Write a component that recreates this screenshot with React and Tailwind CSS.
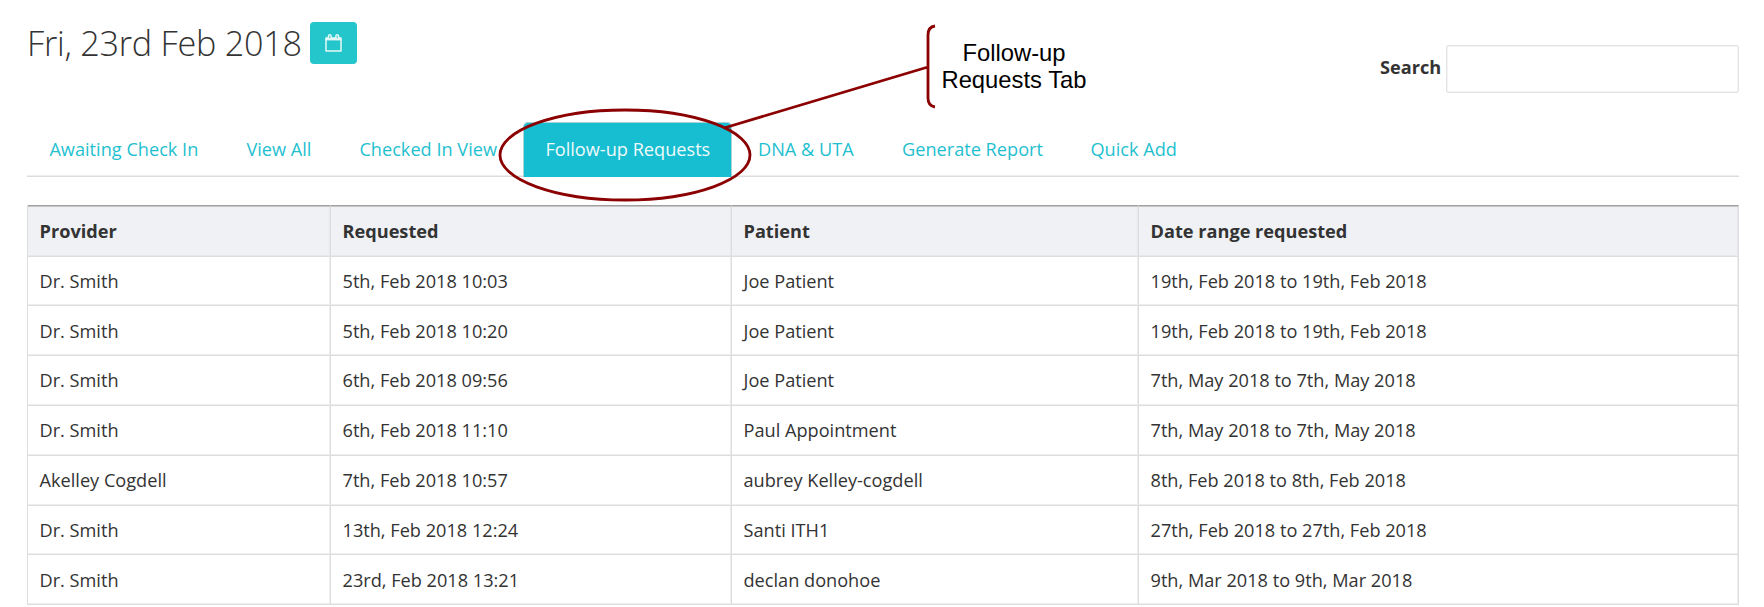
const tabs = [
  { label: 'Awaiting Check In', box: 'w-[197px] pl-[22.4px]' },
  { label: 'View All', box: 'w-[113px] pl-[22.4px]' },
  { label: 'Checked In View', box: 'w-[186px] pl-[22.4px]' },
  { label: 'Follow-up Requests', active: true, box: 'w-[209px] pl-[21.4px]' },
  { label: 'DNA & UTA', box: 'w-[148px] pl-[26px]' },
  { label: 'Generate Report', box: 'w-[188px] pl-[22px]' },
  { label: 'Quick Add', box: 'w-[140px] pl-[22.4px]' },
];

const headers = ['Provider', 'Requested', 'Patient', 'Date range requested'];

const rows = [
  ['Dr. Smith', '5th, Feb 2018 10:03', 'Joe Patient', '19th, Feb 2018 to 19th, Feb 2018'],
  ['Dr. Smith', '5th, Feb 2018 10:20', 'Joe Patient', '19th, Feb 2018 to 19th, Feb 2018'],
  ['Dr. Smith', '6th, Feb 2018 09:56', 'Joe Patient', '7th, May 2018 to 7th, May 2018'],
  ['Dr. Smith', '6th, Feb 2018 11:10', 'Paul Appointment', '7th, May 2018 to 7th, May 2018'],
  ['Akelley Cogdell', '7th, Feb 2018 10:57', 'aubrey Kelley-cogdell', '8th, Feb 2018 to 8th, Feb 2018'],
  ['Dr. Smith', '13th, Feb 2018 12:24', 'Santi ITH1', '27th, Feb 2018 to 27th, Feb 2018'],
  ['Dr. Smith', '23rd, Feb 2018 13:21', 'declan donohoe', '9th, Mar 2018 to 9th, Mar 2018'],
];

const cellStyles = [
  'h-[49px] pt-px leading-[47px]',
  'h-[50px] pt-[2px] leading-[47px]',
  'h-[50px] pt-px leading-[47px]',
  'h-[50px] pt-px leading-[47px]',
  'h-[50px] pt-px leading-[47px]',
  'h-[49px] pt-px leading-[47px]',
  'h-[50px] pt-[2px] leading-[47px]',
];
const columns = 'grid grid-cols-[303px_401px_407px_600px]';

function CalendarIcon() {
  return (
    <svg width="17" height="18" viewBox="0 0 17 18" fill="none" stroke="#e4f8f6">
      <path d="M1 4.5V17H16V4.5" strokeWidth="1.5" strokeLinejoin="round" />
      <path d="M0.4 4.8H16.6" strokeWidth="3.2" />
      <rect x="3.4" y="0.7" width="2.8" height="4.4" rx="1.4" fill="#6fdadc" strokeWidth="1.3" />
      <rect x="10.8" y="0.7" width="2.8" height="4.4" rx="1.4" fill="#6fdadc" strokeWidth="1.3" />
    </svg>
  );
}

export default function App() {
  return (
    <div className="relative h-[607px] w-[1764px] overflow-hidden bg-white pl-[27px] font-['Open_Sans',sans-serif] text-[18.17px] text-[#333]">
      <header className="flex h-[121px] w-[1712px] justify-between">
        <div className="flex pt-[22px]">
          <h1 className="w-[283px] whitespace-nowrap text-[34.2px] font-light leading-[42px] tracking-[-0.25px]">Fri, 23rd Feb 2018</h1>
          <button aria-label="Choose date" className="flex h-[42px] w-[47px] items-center justify-center rounded-[4px] bg-[#24c6cb]">
            <CalendarIcon />
          </button>
        </div>
        <label className="flex pt-[45px] font-bold">
          <span className="w-[66px] pt-[9px] leading-[27px]">Search</span>
          <input className="h-[48px] w-[293px] rounded-[2px] border border-[#e3e3e3] bg-white px-3 shadow-[inset_0_0_0_1px_#f4f4f4]" />
        </label>
      </header>
      <nav className="flex h-[56px] w-[1712px] whitespace-nowrap border-b border-[#ddd] text-[#1fbfd0] shadow-[inset_0_-1px_0_#eee]">
        {tabs.map((t) => (
          <a
            key={t.label}
            className={`${t.box} ${t.active ? 'mt-px h-[55px] rounded-t-[5px] border border-b-0 border-[#a9d3d6] bg-[#17bdd0] leading-[52px] text-[#eefafb]' : 'h-[56px] leading-[56px]'} shrink-0`}
          >
            {t.label}
          </a>
        ))}
      </nav>
      <main className="mt-[28px] w-[1712px] border-l border-[#ddd]">
        <div className={`${columns} h-[52px] bg-[#eff1f5] font-bold`}>
          {headers.map((h) => (
            <div key={h} className="border-b border-r border-t border-[#ddd] border-t-[#a0a0a0] pl-[11.5px] leading-[50px] shadow-[inset_0_1px_0_#c6c6c8,inset_-1px_-1px_0_#e6e7ea]">{h}</div>
          ))}
        </div>
        {rows.map((r, i) => (
          <div key={i} className={columns}>
            {r.map((c, j) => (
              <div key={j} className={`${cellStyles[i]} border-b border-r border-[#ddd] pl-[11.5px] shadow-[inset_-1px_-1px_0_#eee]`}>{c}</div>
            ))}
          </div>
        ))}
      </main>
      <svg className="pointer-events-none absolute left-0 top-0" width="1764" height="210" fill="none" stroke="#8b0000" strokeWidth="2.8">
        <ellipse cx="625" cy="155" rx="125" ry="45" />
        <path d="M724 128L928 67M935 26Q928 27 928 35V98Q928 106 935 107" />
      </svg>
      <div className="absolute left-[934px] top-[39px] w-[160px] text-center font-['Liberation_Sans',sans-serif] text-[23.8px] leading-[27px] text-black">
        Follow-up<br />Requests Tab
      </div>
    </div>
  );
}
